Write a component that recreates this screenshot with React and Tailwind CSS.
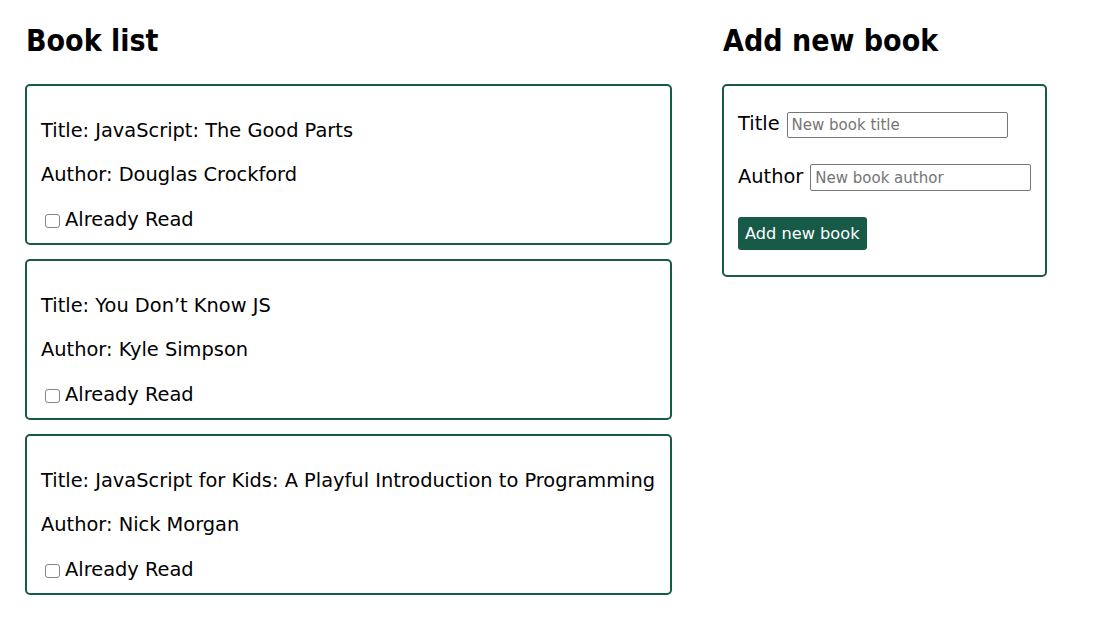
import React from 'react';

const books = [
  { title: 'JavaScript: The Good Parts', author: 'Douglas Crockford' },
  { title: 'You Don’t Know JS', author: 'Kyle Simpson' },
  { title: 'JavaScript for Kids: A Playful Introduction to Programming', author: 'Nick Morgan' },
];

const BookCard = ({ book }) => (
  <div className="flex flex-col border-2 border-[#185a48] rounded-[5px] h-[161px] pt-[34px] pl-[14px] pr-[4px] text-[19.4px] leading-[22px] text-black whitespace-nowrap">
    <p>Title: {book.title}</p>
    <p className="mt-[22px]">Author: {book.author}</p>
    <label className="mt-[23px] flex items-center">
      {/* plain checkbox */}
      <span className="block shrink-0 ml-[4px] mr-[5px] mt-[1px] w-[15px] h-[14px] border border-[#858585] rounded-[3px] bg-white" />
      Already Read
    </label>
  </div>
);

export default function App() {
  return (
    <div className="flex gap-[50px] pl-[25px] pt-[23px] bg-white min-h-[633px] font-['DejaVu_Sans',sans-serif]">
      {/* Book list */}
      <div className="w-[647px] flex flex-col">
        <h2 className="font-['DejaVu_Sans_Condensed',sans-serif] font-bold text-[30px] leading-[36px] pl-[1px] mb-[25px]">
          Book list
        </h2>
        <div className="flex flex-col gap-[14px]">
          {books.map((b) => (
            <BookCard key={b.title} book={b} />
          ))}
        </div>
      </div>

      {/* Add form */}
      <div className="w-[325px] flex flex-col">
        <h2 className="font-['DejaVu_Sans_Condensed',sans-serif] font-bold text-[30px] leading-[36px] pl-[1px] mb-[25px]">
          Add new book
        </h2>
        <div className="border-2 border-[#185a48] rounded-[5px] h-[193px] pt-[26px] pl-[14px] flex flex-col items-start text-[19.4px] leading-[22px]">
          <div className="flex items-baseline gap-[7px]">
            <span>Title</span>
            <input
              placeholder="New book title"
              className="w-[221px] h-[26px] border border-[#767676] rounded-[2px] px-[4px] text-[15px] placeholder:text-[#757575] outline-none"
            />
          </div>
          <div className="flex items-baseline gap-[7px] mt-[26px]">
            <span>Author</span>
            <input
              placeholder="New book author"
              className="w-[221px] h-[27px] border border-[#767676] rounded-[2px] px-[4px] text-[15px] placeholder:text-[#757575] outline-none"
            />
          </div>
          <button className="mt-[26px] h-[33px] px-[7px] bg-[#185a48] text-white text-[16.2px] rounded-[3px]">
            Add new book
          </button>
        </div>
      </div>
    </div>
  );
}
